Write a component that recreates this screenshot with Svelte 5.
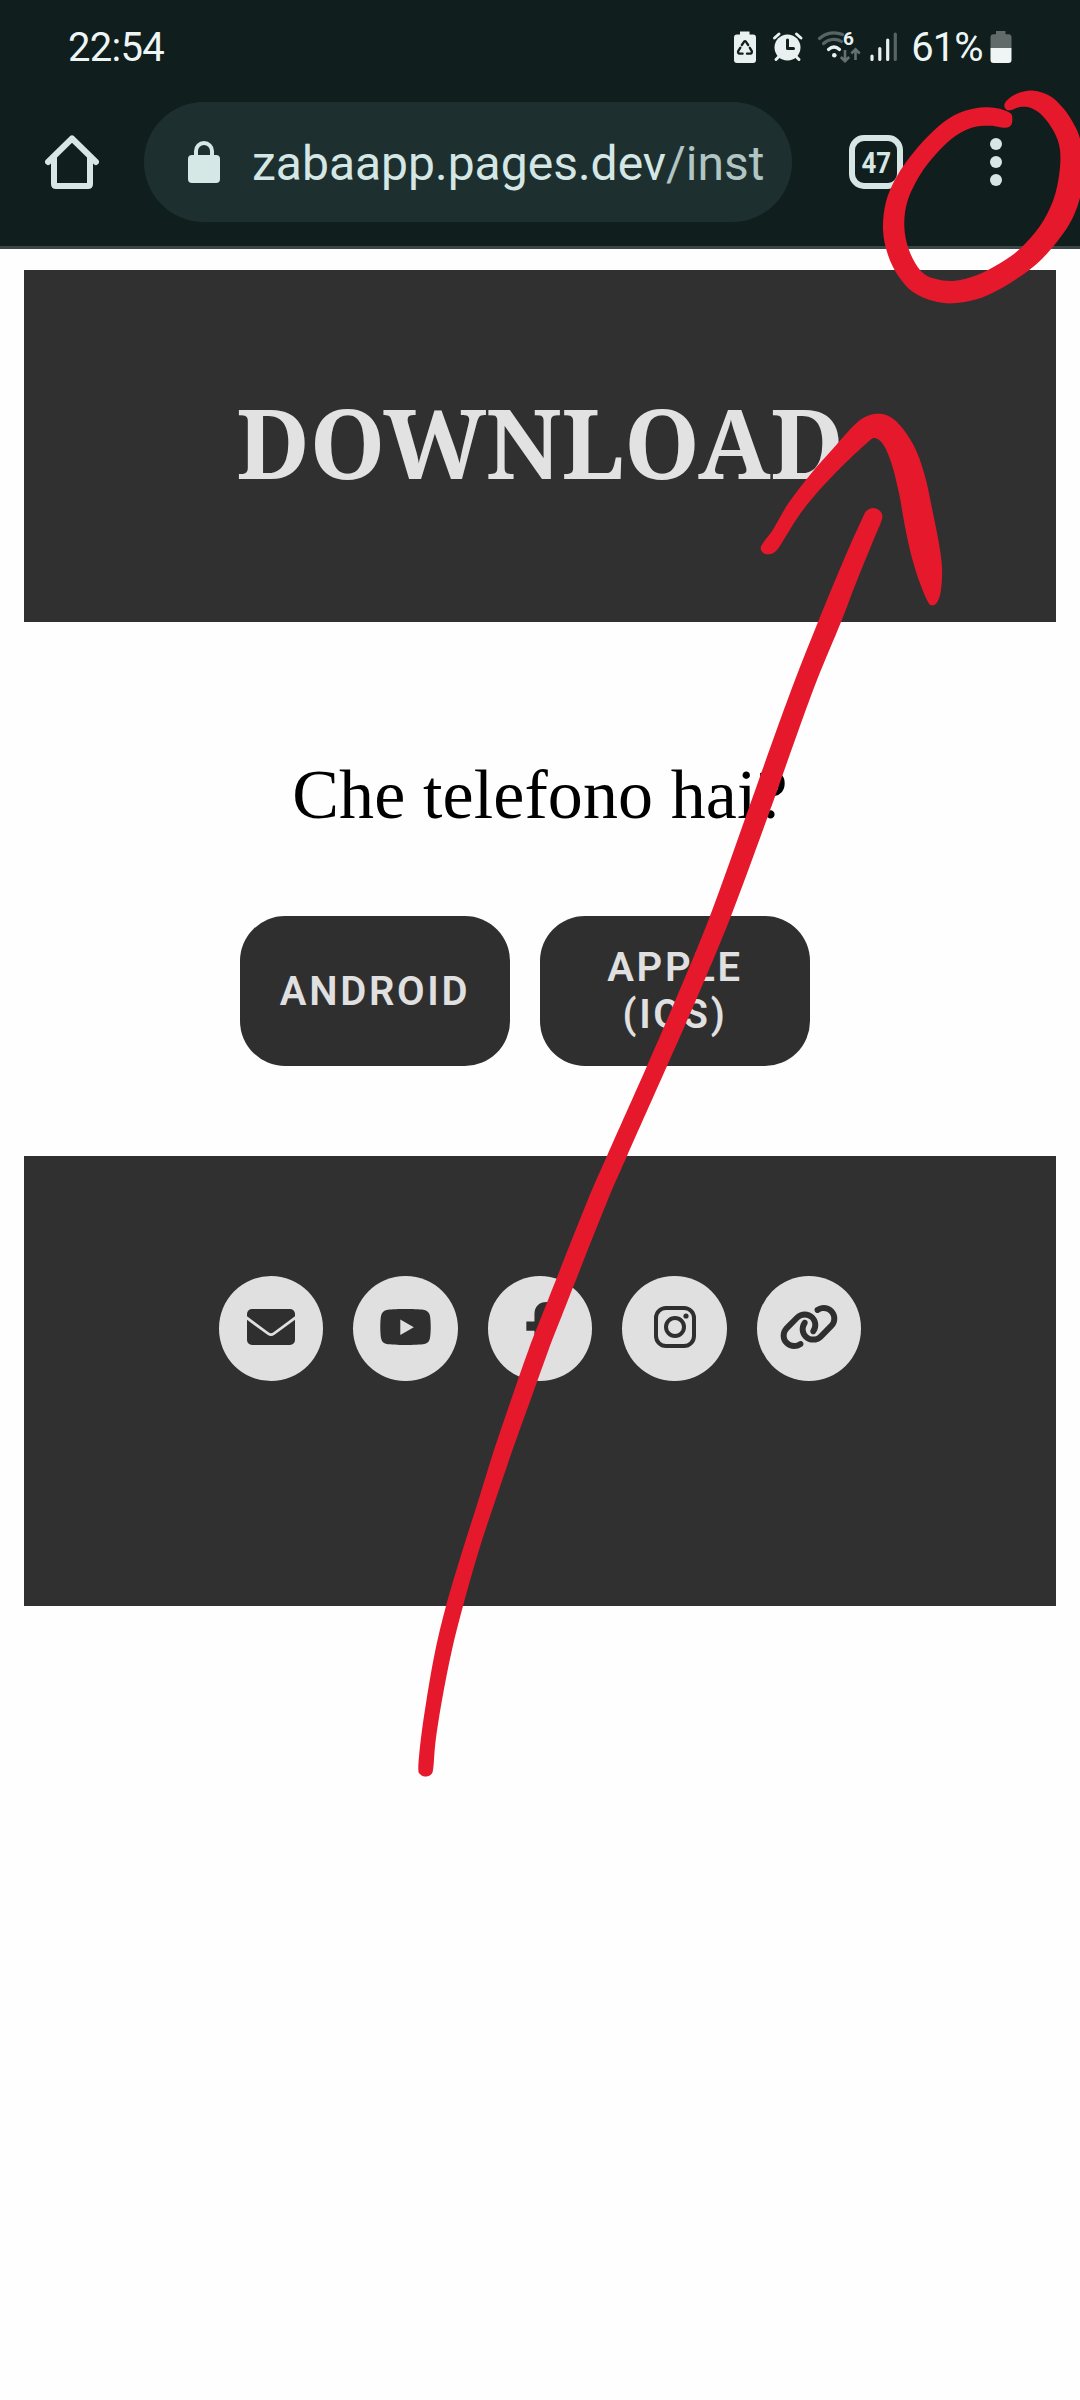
<script>
  // Closed smooth outline through a list of points (Catmull-Rom to Bezier).
  function outline(pts) {
    const n = pts.length;
    const f = (v) => v.toFixed(1);
    let d = `M${pts[0][0]} ${pts[0][1]}`;
    for (let i = 0; i < n; i++) {
      const a = pts[(i - 1 + n) % n];
      const b = pts[i];
      const c = pts[(i + 1) % n];
      const e = pts[(i + 2) % n];
      d += `C${f(b[0] + (c[0] - a[0]) / 6)} ${f(b[1] + (c[1] - a[1]) / 6)} ${f(c[0] - (e[0] - b[0]) / 6)} ${f(c[1] - (e[1] - b[1]) / 6)} ${c[0]} ${c[1]}`;
    }
    return d + 'Z';
  }

  const loop = outline([
    [913, 315], [922, 300], [950, 281], [1000, 272], [1050, 288], [1090, 325], [1120, 370], [1141, 420], [1151, 500],
    [1143, 580], [1122, 645], [1090, 700], [1040, 762], [985, 812], [900, 867], [830, 898], [760, 910],
    [700, 903], [640, 877], [595, 828], [564, 765], [549, 690], [558, 605], [590, 530], [640, 458],
    [700, 393], [760, 347], [830, 324], [890, 325], [930, 339], [937, 355], [933, 376], [915, 383],
    [870, 377], [820, 382], [765, 409], [710, 460], [660, 525], [622, 605], [613, 680], [627, 750],
    [660, 810], [700, 835], [760, 843], [830, 826], [900, 790], [960, 746], [1020, 678], [1060, 600],
    [1078, 520], [1080, 450], [1063, 397], [1030, 350], [995, 325], [960, 321], [930, 331], [918, 328]
  ]);

  const head = outline([
    [122, 503], [134, 482], [160, 447], [205, 370], [268, 287], [340, 205], [400, 138], [435, 111], [470, 101],
    [510, 110], [550, 148], [590, 215], [618, 300], [637, 390], [655, 480], [666, 560], [663, 630],
    [652, 666], [637, 676], [624, 666], [600, 610], [575, 530], [555, 440], [537, 340], [516, 255],
    [492, 197], [464, 174], [435, 194], [370, 255], [300, 328], [240, 402], [200, 465], [170, 511],
    [148, 523], [129, 518]
  ]);

  const shaft = outline([
    [418.3, 1768], [421, 1738], [426.5, 1700], [435, 1652], [446, 1606], [462, 1552], [478.5, 1500],
    [494, 1450], [511, 1400], [528.5, 1350], [548, 1300], [587, 1202], [607, 1156], [647, 1066],
    [675.5, 1000], [710, 916], [746, 816], [773, 740], [795, 680], [818, 622], [845, 557], [862.5, 518],
    [866.5, 511], [873, 508], [880, 511], [882, 519], [873.5, 540], [856, 583], [841, 622],
    [817, 680], [795, 740], [768, 816], [731, 916], [696, 1000], [667, 1066], [627, 1156],
    [607, 1202], [568, 1300], [548.5, 1350], [530.5, 1400], [512.5, 1450], [495.5, 1500], [479, 1550],
    [463, 1606], [451.5, 1652], [442, 1700], [435.5, 1742], [433.3, 1768], [431, 1774.5], [425.5, 1776.5], [420.5, 1774.5]
  ]);
</script>

<div class="screen">
  <header>
    <div class="status">
      <span class="time">22:54</span>
      <svg class="s-icons" width="180" height="40" viewBox="730 27 180 40">
        <path fill="#e8f1f0" d="M741 31.5h9.500v3h3.500a3 3 0 0 1 3 3V60a3 3 0 0 1-3 3h-16a3 3 0 0 1-3-3V37.500a3 3 0 0 1 3-3h3z" />
        <g fill="none" stroke="#101e1e" stroke-width="2.300" stroke-linecap="round" stroke-linejoin="round">
          <path d="M742.800 45l2.200-3.200q1-1.200 2 0l2.200 3.200M750.800 47.800l2 3.300q.5 2.300-1.600 2.600h-3.200M743.600 53.700h-2.800q-2.300-.3-1.600-2.600l2.200-3.500" />
        </g>
        <circle cx="788.500" cy="47.500" r="13" fill="#e8f1f0" />
        <path stroke="#e8f1f0" stroke-width="3" stroke-linecap="round" d="M775.500 38l4.500-4M797.500 34l4.500 4M780 56.500l-3 3M797 56.500l3 3" />
        <path fill="none" stroke="#101e1e" stroke-width="3" stroke-linecap="round" stroke-linejoin="round" d="M788.500 40v8.500h6" />
        <g fill="none" stroke-width="3.200" stroke-linecap="round">
          <path stroke="#586464" d="M820.500 38.500C827 32.500 836 31.500 843.500 34.500M824.500 43.500C829 39 837 38 842.500 41.500" />
          <path stroke="#e8f1f0" d="M829.500 49.500Q835 44.500 840.500 49.500" />
        </g>
        <circle cx="835.300" cy="55.200" r="2.300" fill="#e8f1f0" />
        <path fill="none" stroke="#65706f" stroke-width="2.600" d="M846 50v11M841.800 57l4.200 4.200 4.200-4.200M856.500 60V50M852.300 53.500l4.200-4.200 4.200 4.200" />
        <text x="844" y="45" class="six">6</text>
        <g stroke-width="3.200" stroke-linecap="round">
          <path stroke="#e8f1f0" d="M873 56v3.500M880.800 48.500v11M888.700 40v19.500" />
          <path stroke="#586464" d="M896.300 34v25.500" />
        </g>
      </svg>
      <span class="percent">61%</span>
      <svg class="battery" width="22" height="32" viewBox="0 0 22 32">
        <path fill="#606b6a" d="M6 0h9.500v3.300H18.500a3 3 0 0 1 3 3V17H.5V6.300a3 3 0 0 1 3-3H6z" />
        <path fill="#eef5f4" d="M.5 17h21v12a3 3 0 0 1-3 3h-15a3 3 0 0 1-3-3z" />
      </svg>
    </div>
    <div class="toolbar">
      <svg class="home" width="54" height="54" viewBox="0 0 54 54" fill="none" stroke="#d6e6e4" stroke-width="6" stroke-linecap="round" stroke-linejoin="round">
        <path d="M3 27L27 3.500 51 27" />
        <path d="M9 23v26q0 2 2 2h32q2 0 2-2V23" />
      </svg>
      <div class="address">
        <svg width="32" height="42" viewBox="0 0 32 42">
          <rect y="14" width="32" height="28" rx="4" fill="#d6e8e6" />
          <path d="M8 16v-6a8 8 0 0 1 16 0v6" fill="none" stroke="#d6e8e6" stroke-width="4" />
        </svg>
        <span class="url">zabaapp.pages.dev<i>/inst</i></span>
      </div>
      <div class="tabs"><b>47</b></div>
      <div class="more"><i></i><i></i><i></i></div>
    </div>
  </header>

  <main>
    <section class="hero"><h1>DOWNLOAD</h1></section>
    <section class="choice">
      <p>Che telefono hai?</p>
      <div class="buttons">
        <button>ANDROID</button>
        <button>APPLE<br />(IOS)</button>
      </div>
    </section>
    <footer>
      <span class="social">
        <svg width="48" height="36" viewBox="0 0 48 36" fill="#2f2f2f">
          <path d="M5 0h38a5 5 0 0 1 5 5v2.200L26.500 23.300q-2.500 1.700-5 0L0 7.200V5a5 5 0 0 1 5-5z" />
          <path d="M0 10.800l20.500 15q3.500 2.500 7 0L48 10.800V31a5 5 0 0 1-5 5H5a5 5 0 0 1-5-5z" />
        </svg>
      </span>
      <span class="social">
        <svg width="51" height="36" viewBox="0 0 51 36">
          <path fill="#2f2f2f" fill-rule="evenodd" d="M25.500 0C36 0 41 .4 44.500 1q4.300 1 5.400 5.500C51 12 51 24 49.900 29.500Q48.800 34 44.500 35C37 36.300 14 36.300 6.500 35Q2.200 34 1.100 29.500C0 24 0 12 1.100 6.500Q2.200 2 6.500 1C10 .4 15 0 25.500 0zM20.300 10.500v15.500l13.500-7.700z" />
        </svg>
      </span>
      <span class="social">
        <svg width="32" height="51" viewBox="0 0 320 512">
          <path fill="#2f2f2f" d="M279.140 288l14.220-92.660h-88.910v-60.130c0-25.350 12.420-50.060 52.240-50.060h40.420V6.260S260.430 0 225.360 0c-73.220 0-121.080 44.380-121.080 124.720v70.620H22.890V288h81.390v224h100.170V288z" />
        </svg>
      </span>
      <span class="social">
        <svg width="42" height="42" viewBox="0 0 42 42" fill="none" stroke="#2f2f2f" stroke-width="4">
          <rect x="2" y="2" width="38" height="38" rx="10" />
          <circle cx="21" cy="21" r="9" />
          <circle cx="32" cy="10" r="2.600" fill="#2f2f2f" stroke="none" />
        </svg>
      </span>
      <span class="social">
        <svg width="60" height="48" viewBox="0 0 640 512">
          <path fill="#2f2f2f" d="M579.8 267.7c56.5-56.5 56.5-148 0-204.5c-50-50-128.8-56.500-186.300-15.400l-1.600 1.100c-14.400 10.300-17.700 30.300-7.400 44.600s30.300 17.700 44.600 7.400l1.600-1.100c32.100-22.900 76-19.300 103.800 8.600c31.500 31.500 31.500 82.500 0 114L422.300 334.800c-31.500 31.500-82.500 31.500-114 0c-27.900-27.900-31.500-71.800-8.600-103.800l1.100-1.600c10.300-14.400 6.900-34.400-7.400-44.600s-34.400-6.900-44.600 7.400l-1.100 1.600C206.500 251.200 213 330 263 380c56.500 56.500 148 56.500 204.500 0L579.800 267.700zM60.200 244.300c-56.500 56.500-56.500 148 0 204.500c50 50 128.800 56.500 186.300 15.400l1.600-1.100c14.400-10.300 17.700-30.300 7.400-44.600s-30.300-17.700-44.600-7.400l-1.600 1.100c-32.100 22.900-76 19.300-103.800-8.600C74 372 74 321 105.500 289.500L217.700 177.200c31.500-31.500 82.500-31.500 114 0c27.900 27.900 31.500 71.800 8.600 103.900l-1.100 1.600c-10.300 14.400-6.900 34.400 7.400 44.600s34.400 6.900 44.600-7.400l1.100-1.600C433.500 260.800 427 182 377 132c-56.500-56.500-148-56.500-204.500 0L60.200 244.300z" />
        </svg>
      </span>
    </footer>
  </main>

  <svg class="marker" width="1080" height="2400" viewBox="0 0 1080 2400" fill="#e6182c">
    <path transform="translate(700 0) scale(.33333)" d={loop} />
    <path transform="translate(720 380) scale(.33333)" d={head} />
    <path d={shaft} />
  </svg>
</div>

<style>
  :global(body) {
    background: #fefefe;
  }
  .screen {
    position: relative;
    width: 1080px;
    height: 2400px;
    overflow: hidden;
    background: #fefefe;
    font-family: Roboto, sans-serif;
  }
  svg {
    display: block;
    flex: none;
  }
  header {
    box-sizing: border-box;
    height: 249px;
    background: #101e1e;
    border-bottom: 3px solid #3b4646;
  }
  .status {
    display: flex;
    align-items: center;
    height: 94px;
    padding: 0 68px;
    color: #eef6f5;
    font-size: 40px;
    white-space: nowrap;
  }
  .time {
    letter-spacing: -0.7px;
    width: 663px;
    padding-top: 1px;
  }
  .six {
    font: 700 19px Roboto, sans-serif;
    fill: #e8f1f0;
  }
  .percent {
    width: 79px;
    margin-left: 2px;
    padding-top: 1px;
    letter-spacing: -1px;
  }
  .toolbar {
    display: flex;
    align-items: center;
    height: 136px;
    padding-left: 45px;
  }
  .address {
    display: flex;
    align-items: center;
    box-sizing: border-box;
    width: 648px;
    height: 120px;
    margin-left: 45px;
    padding-left: 44px;
    border-radius: 60px;
    background: #1d302f;
  }
  .url {
    margin-left: 32px;
    padding-top: 2px;
    font-size: 48px;
    color: #d5e7e5;
    white-space: nowrap;
  }
  .url i {
    font-style: normal;
    color: #b1c5c3;
  }
  .tabs {
    display: flex;
    align-items: center;
    justify-content: center;
    box-sizing: border-box;
    width: 54px;
    height: 54px;
    margin-left: 57px;
    border: 6px solid #d6e6e4;
    border-radius: 15px;
    color: #d6e6e4;
    font-size: 30px;
  }
  .tabs b {
    transform: scaleX(0.86);
  }
  .more {
    display: flex;
    flex-direction: column;
    gap: 6px;
    margin-left: 87px;
  }
  .more i {
    width: 12px;
    height: 12px;
    border-radius: 50%;
    background: #d6e6e4;
  }
  main {
    padding: 21px 24px 0;
  }
  .hero {
    display: flex;
    align-items: center;
    justify-content: center;
    box-sizing: border-box;
    height: 352px;
    padding-bottom: 10px;
    background: #303030;
  }
  h1 {
    margin: 0;
    font: 700 96px 'Noto Serif', 'Liberation Serif', serif;
    color: #e2e2e2;
  }
  .choice {
    box-sizing: border-box;
    height: 534px;
    padding-top: 133px;
  }
  p {
    margin: 0;
    height: 80px;
    font: 70px/80px 'Liberation Serif', serif;
    letter-spacing: 0.1px;
    text-align: center;
    color: #000;
  }
  .buttons {
    display: flex;
    gap: 30px;
    margin: 81px 0 0 216px;
  }
  button {
    width: 270px;
    height: 150px;
    padding: 0;
    border: 0;
    border-radius: 45px;
    background: #2f2f2f;
    color: #e0e0e0;
    font: 600 40px/47px Roboto, sans-serif;
    letter-spacing: 2.700px;
  }
  footer {
    display: flex;
    justify-content: center;
    gap: 30px;
    box-sizing: border-box;
    height: 450px;
    padding-top: 120px;
    background: #303030;
  }
  .social {
    display: flex;
    align-items: center;
    justify-content: center;
    box-sizing: border-box;
    width: 104.500px;
    height: 105px;
    padding-bottom: 3px;
    border-radius: 50%;
    background: #e0e0e0;
  }
  .marker {
    position: absolute;
    top: 0;
    left: 0;
    pointer-events: none;
  }
</style>
